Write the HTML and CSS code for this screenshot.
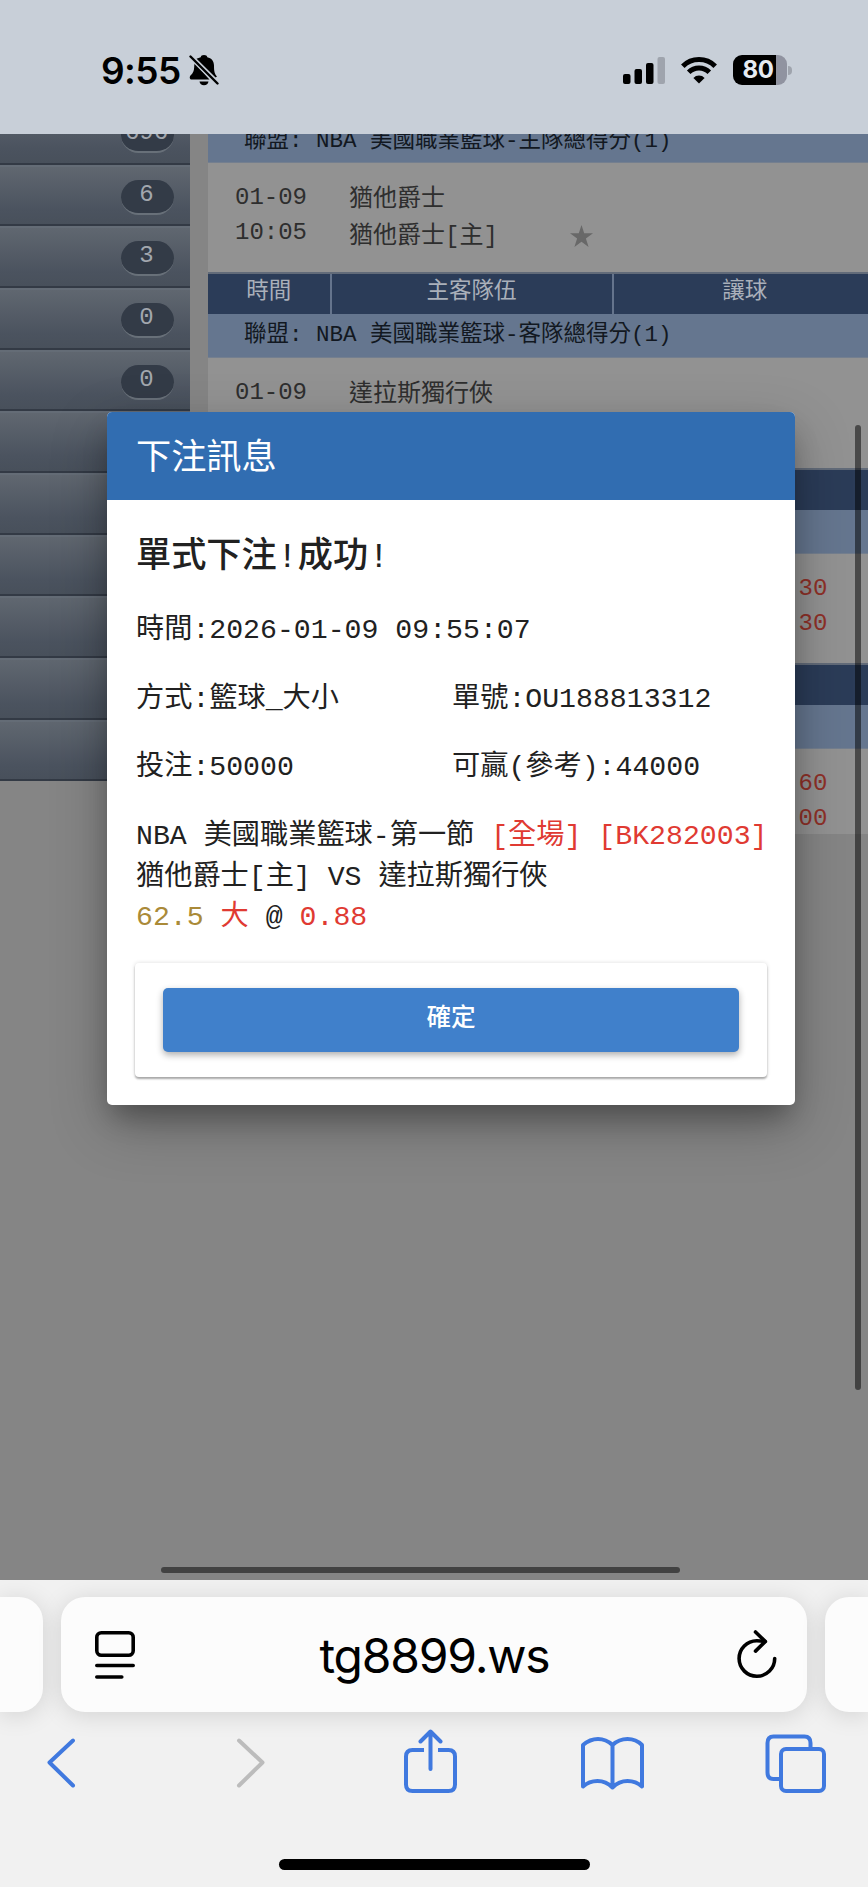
FILE: index.html
```html
<!DOCTYPE html>
<html lang="zh-Hant">
<head>
<meta charset="utf-8">
<title>下注訊息</title>
<link rel="stylesheet" href="styles.css">
</head>
<body>
<div class="phone">
  <header class="status">
    <div class="clock">
      <span>9:55</span>
      <svg class="bell" width="30" height="32" viewBox="0 0 30 32"><path d="M15 1c-2 0-3 .9-3.300 2.200L7.500 4.800 26.500 23.500 28 22.500C25.500 20 25 17 25 11.500 25 7 22.500 4 18.300 3.200 18 1.900 17 1 15 1zM5.800 9C5.300 10.500 5.200 12 5.200 13c-.2 4-1 6-3.700 8.500C.3 22.700.5 25.500 2.500 25.500H20.500zM10.500 27.500h9c-.3 2.300-2 3.800-4.500 3.800s-4.200-1.500-4.500-3.800z"/><path d="M1.500 2.500 28.500 29.500" stroke="#c8cfd8" stroke-width="5"/><path d="M1.500 2.500 28.500 29.500" stroke="#000" stroke-width="2.400" stroke-linecap="round"/></svg>
    </div>
    <div class="signals">
      <svg width="42" height="27" viewBox="0 0 42 27"><rect x="0" y="17" width="7.500" height="10" rx="2"/><rect x="11.500" y="12" width="7.500" height="15" rx="2"/><rect x="23" y="6" width="7.500" height="21" rx="2"/><rect x="34.500" y="0" width="7.500" height="27" rx="2" fill="#9fa4ad"/></svg>
      <svg class="wifi" width="36" height="27" viewBox="0 0 36 27"><g fill="none" stroke="#000" stroke-width="5"><path d="M1.800 9.200a23 23 0 0 1 32.400 0"/><path d="M7.700 15.200a14.600 14.600 0 0 1 20.600 0"/></g><path d="M18 26.500l-5.600-5.600a8 8 0 0 1 11.200 0z"/></svg>
      <div class="battery"><span>80</span></div><i class="nub"></i>
    </div>
  </header>

  <main class="page">
    <nav class="side">
      <div class="item"><span class="badge">696</span></div>
      <div class="item"><span class="badge">6</span></div>
      <div class="item"><span class="badge">3</span></div>
      <div class="item"><span class="badge">0</span></div>
      <div class="item"><span class="badge">0</span></div>
      <div class="item"></div><div class="item"></div><div class="item"></div>
      <div class="item"></div><div class="item"></div><div class="item"></div>
    </nav>
    <section class="board">
      <div class="league first">聯盟: NBA 美國職業籃球-主隊總得分(1)</div>
      <div class="match"><div>01-09<br>10:05</div><div class="teams">猶他爵士<br>猶他爵士[主]</div>
        <svg class="star" width="23" height="22" viewBox="0 0 23 22"><path fill="#686868" d="M11.500 0l2.700 8.300H23l-7.100 5.200 2.700 8.500-7.100-5.300L4.400 22l2.700-8.500L0 8.300h8.800z"/></svg></div>
      <div class="head"><span>時間</span><span>主客隊伍</span><span>讓球</span></div>
      <div class="league">聯盟: NBA 美國職業籃球-客隊總得分(1)</div>
      <div class="match"><div>01-09</div><div class="teams">達拉斯獨行俠</div></div>
      <div class="head"></div><div class="league"></div>
      <div class="match"><div class="odds">30<br>30</div></div>
      <div class="head"></div><div class="league"></div>
      <div class="match last"><div class="odds">60<br>00</div></div>
    </section>

    <div class="dialog">
      <h1 class="dialog-title">下注訊息</h1>
      <div class="dialog-body">
        <h2 class="result">單式下注!成功!</h2>
        <div class="line">時間:2026-01-09 09:55:07</div>
        <div class="line pair"><span>方式:籃球_大小</span><span>單號:OU188813312</span></div>
        <div class="line pair"><span>投注:50000</span><span>可贏(參考):44000</span></div>
        <div class="line bet">NBA 美國職業籃球-第一節 <b class="red">[全場] [BK282003]</b><br>猶他爵士[主] VS 達拉斯獨行俠<br><b class="gold">62.5</b> <b class="red">大</b> @ <b class="red">0.88</b></div>
        <div class="card"><button class="ok">確定</button></div>
      </div>
    </div>
    <i class="bar-v"></i><i class="bar-h"></i>
  </main>

  <footer class="browser">
    <div class="tabs">
      <div class="stub left"></div>
      <div class="address">
        <svg width="40" height="48" viewBox="0 0 40 48" fill="none" stroke="#000" stroke-width="3.600" stroke-linecap="round"><rect x="1.800" y="1.800" width="36.400" height="22.400" rx="4.500"/><path d="M1.800 34.500h36.400M1.800 46h25"/></svg>
        <span class="url">tg8899.ws</span>
        <svg width="40" height="49" viewBox="0 0 40 49" fill="none" stroke="#000" stroke-width="3.600" stroke-linecap="round" stroke-linejoin="round"><path d="M37.700 28.500a17.800 17.800 0 1 1-17.900-17.800q4.200 0 8.200.8"/><path d="M18.500 2l9.900 9.500-9.900 9.600"/></svg>
      </div>
      <div class="stub right"></div>
    </div>
    <div class="tools">
      <svg width="66" height="66" viewBox="0 0 66 66"><path d="M45 11.500 21.500 33.500 45 56.500"/></svg>
      <svg class="off" width="66" height="66" viewBox="0 0 66 66"><path d="M27 11.500 50.500 33.500 27 56.500"/></svg>
      <svg width="66" height="66" viewBox="1 0 66 66"><path stroke-linecap="butt" d="M29 21H17.500Q11 21 11 27.500V55.500Q11 62 17.500 62H53.500Q60 62 60 55.500V27.500Q60 21 53.500 21H43"/><path d="M35.500 40V3M25.500 12.500 35.500 2.500 45.500 12.500"/></svg>
      <svg width="66" height="66" viewBox="0 0 66 66"><path d="M33.500 16Q27 10 19 10T4 16V57.500Q10 52 18.500 52T33.500 58.500Q40 52 48.500 52T63 57.500V16Q57 10 48.500 10T33.500 16V58.500"/></svg>
      <svg width="66" height="66" viewBox="0 0 66 66"><rect x="18" y="20" width="43" height="42" rx="5"/><path d="M47.500 19V14Q47.500 7.500 41.500 7.500H10.500Q4.500 7.500 4.500 14V43.500Q4.500 50 10.500 50H17"/></svg>
    </div>
    <div class="home"></div>
  </footer>
</div>
</body>
</html>
```

FILE: styles.css
```css
* { box-sizing: border-box; }
body { margin: 0; }
.phone {
  width: 868px; height: 1887px; display: flex; flex-direction: column; overflow: hidden;
  font-family: "Liberation Mono", "Noto Sans CJK TC", monospace;
}
svg { display: block; flex: none; }

/* status bar */
.status {
  height: 134px; background: #c8cfd8; display: flex; justify-content: space-between;
  padding: 50px 76px 0 101px; font-family: Inter, sans-serif; flex: none;
}
.clock { display: flex; height: 40px; align-items: center; gap: 8px; font-size: 37px; font-weight: 600; letter-spacing: -.6px; }
.signals { display: flex; height: 40px; align-items: center; }
.wifi { margin: 0 16px; }
.battery {
  width: 54px; height: 30px; border-radius: 9px; background: linear-gradient(90deg, #000 80%, #9093a0 80%);
  color: #e6ebf2; font-size: 24px; font-weight: 700; line-height: 30px; padding-left: 10px; letter-spacing: -.3px;
}
.nub { width: 4px; height: 9px; margin-left: 1.500px; border-radius: 0 4px 4px 0; background: #9fa4ad; }

/* dimmed page */
.page { position: relative; height: 1446px; flex: none; overflow: hidden; background: #858585; display: flex; align-items: flex-start; gap: 18px; }
.side { width: 190px; flex: none; margin-top: -31.200px; }
.item {
  height: 61.700px; border-top: 2px solid #646c76; border-bottom: 2px solid #333a45; padding: 13px 16px 0 0;
  background: linear-gradient(#606770, #4b535f 75%, #48505b);
}
.badge {
  display: block; width: 53px; height: 35px; margin-left: auto; border-radius: 18px; background: #333b47;
  border-bottom: 2px solid #687079; color: #a2a7ae; font-size: 24px; line-height: 30px; padding-right: 2px; text-align: center;
}
.board { flex: 1; margin-top: -15px; }
.league { height: 44px; background: #65768f; color: #121821; padding-left: 36px; font-size: 22.500px; line-height: 42px; border-bottom: 1px solid #747f8f; white-space: nowrap; }
.first { line-height: 45px; }
.match {
  position: relative; height: 109.300px; background: #929292; color: #2e2e2e; display: flex;
  padding: 17px 0 0 27px; font-size: 24px; line-height: 35.400px;
}
.teams { margin-left: 42px; padding-top: 1px; line-height: 37px; }
.star { position: absolute; left: 362px; top: 62px; }
.head {
  height: 42px; background: #2b3c58; color: #aab0ba; border-top: 2px solid #626b79;
  display: grid; grid-template-columns: 121.500px 282px 264.500px; font-size: 22.500px; line-height: 37px; text-align: center;
}
.head span + span { border-left: 2px solid #65748c; }
.odds { margin-left: 356px; padding-left: 207.500px; color: #8e3028; }
.last { height: 85px; }
.bar-v, .bar-h { position: absolute; background: rgba(0, 0, 0, .5); border-radius: 3px; }
.bar-v { left: 855px; top: 291px; width: 6px; height: 965px; }
.bar-h { left: 161px; top: 1433px; width: 519px; height: 6px; }

/* dialog */
.dialog {
  position: absolute; left: 107px; top: 278px; width: 688px; height: 692.500px; border-radius: 5px; background: #fff;
  box-shadow: 0 16px 26px -6px rgba(0, 0, 0, .28), 0 20px 55px rgba(0, 0, 0, .26); overflow: hidden; color: #212121;
}
.dialog-title { margin: 0; height: 88px; padding: 5px 0 0 29px; background: #316db1; color: #fff; font-size: 35.200px; font-weight: 400; line-height: 87px; }
.dialog-body { padding: 31px 28px 0; }
.result { margin: 0 0 26px; padding-left: 1px; font-size: 35.200px; line-height: 54px; font-weight: 500; }
.line { padding-left: 1px; font-size: 28.200px; line-height: 40.500px; margin-bottom: 28.200px; white-space: nowrap; }
.line b { font-weight: 400; }
.pair { display: grid; grid-template-columns: 316px 1fr; }
.bet { margin-bottom: 24.400px; }
.red { color: #e03a32; }
.gold { color: #aa8a38; }
.card { height: 114px; padding: 25px 28px; border-radius: 4px; box-shadow: 0 2px 2px rgba(0, 0, 0, .3), 0 0 4px rgba(0, 0, 0, .14); }
.ok {
  display: block; width: 100%; height: 64px; border: 0; border-radius: 5px; background: #4080cb; color: #fff; padding: 0 0 9px;
  font: 500 24.600px "Noto Sans CJK TC", sans-serif; box-shadow: 0 3px 7px rgba(0, 0, 0, .32);
}

/* browser chrome */
.browser { flex: 1; background: #f1f1f1; display: flex; flex-direction: column; align-items: center; overflow: hidden; }
.tabs { width: 868px; display: flex; gap: 18px; padding-top: 17px; }
.stub, .address { height: 115px; background: #fcfcfc; box-shadow: 0 3px 24px rgba(0, 0, 0, .13); }
.stub { width: 43px; flex: none; }
.left { border-radius: 0 24px 24px 0; }
.right { border-radius: 24px 0 0 24px; }
.address { flex: 1; border-radius: 24px; display: flex; align-items: center; justify-content: space-between; padding: 0 30px 0 34px; }
.url { font: 400 48px Inter, sans-serif; letter-spacing: -1.200px; padding-top: 2px; margin-right: 3px; }
.tools { width: 868px; padding: 17px 39px 0 28px; display: flex; justify-content: space-between; }
.tools svg { fill: none; stroke: #4079df; stroke-width: 4; stroke-linecap: round; stroke-linejoin: round; }
.tools .off { stroke: #bcbcbc; }
.home { width: 311px; height: 11px; border-radius: 6px; background: #000; margin: 64px 0 0; }
```
